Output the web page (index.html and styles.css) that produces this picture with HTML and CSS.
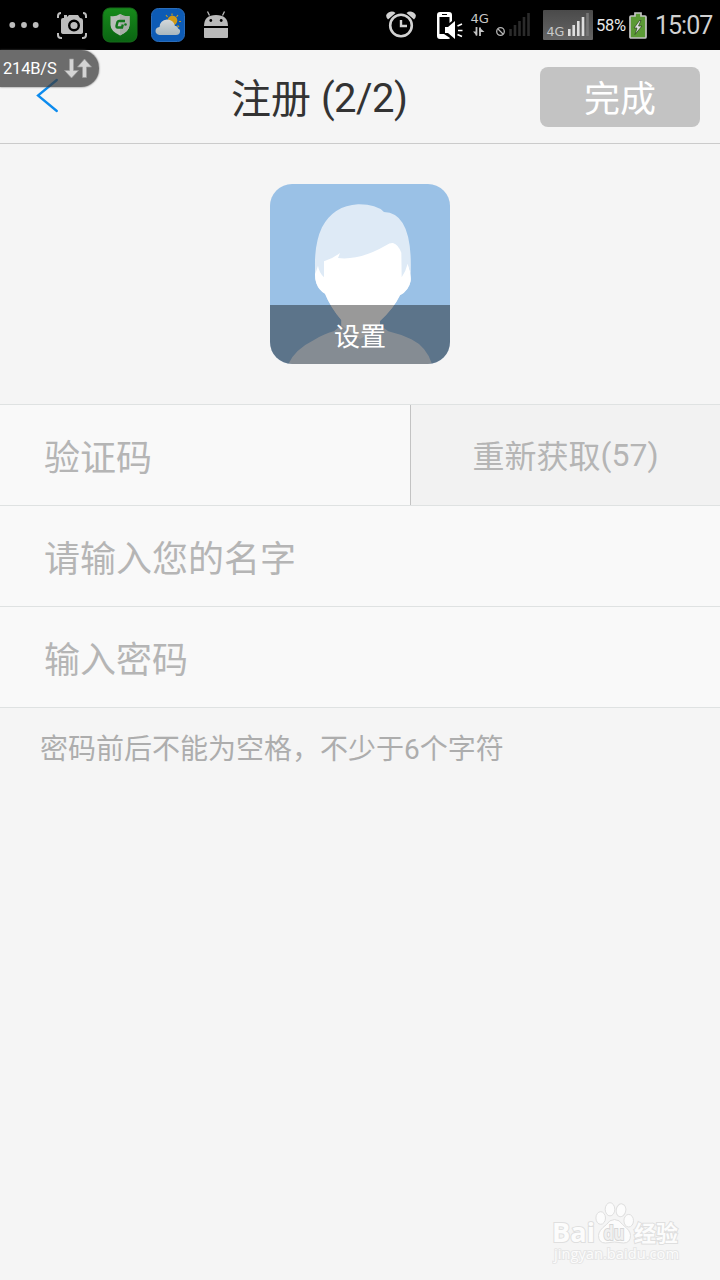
FILE: index.html
```html
<!DOCTYPE html>
<html lang="zh-CN">
<head>
<meta charset="utf-8">
<title>注册</title>
<link rel="stylesheet" href="styles.css">
</head>
<body>
<div class="statusbar">
  <svg class="slot" viewBox="0 0 48 50"><g fill="#bdbdbd"><circle cx="12.300" cy="25" r="2.900"/><circle cx="24" cy="25" r="2.900"/><circle cx="35.700" cy="25" r="2.900"/></g></svg>
  <svg class="slot" viewBox="0 0 48 50">
    <path d="M10 18v-2q0-3 3-3M35 13q3 0 3 3v2M10 33v2q0 3 3 3h1M34 38h1q3 0 3-3v-2" fill="none" stroke="#bdbdbd" stroke-width="2"/>
    <path d="M15 18h1v-3h3v2l2-2h9l2 3q3 0 3 3v11q0 2-3 2H16q-3 0-3-2V20q0-2 2-2z" fill="#bdbdbd"/>
    <circle cx="26" cy="25.500" r="4.800" fill="none" stroke="#000" stroke-width="2.400"/>
  </svg>
  <svg class="slot" viewBox="0 0 48 50">
    <defs><linearGradient id="green" x2="0" y2="1"><stop offset="0" stop-color="#178a1b"/><stop offset="1" stop-color="#0a6412"/></linearGradient></defs>
    <rect x="7" y="8" width="34" height="34" rx="7" fill="url(#green)" stroke="#176b1b"/>
    <path d="M24 14q5 3 9.500 2v9q0 6-9.500 10.500Q14.500 31 14.500 25v-9q5 1 9.500-2z" fill="#b9beb9"/>
    <path d="M24 14q5 3 9.500 2v9q0 6-9.500 10.500z" fill="#a8afa8"/>
    <path d="M29 21h-6q-1 0-1.500 1l-1 4q0 1.500 1 1.500H26l.8-3" fill="none" stroke="#12761b" stroke-width="2.400"/><circle cx="29.500" cy="24.500" r="1.300" fill="#12761b"/>
  </svg>
  <svg class="slot" viewBox="0 0 48 50">
    <defs><linearGradient id="cloud" x2="0" y2="1"><stop offset="0" stop-color="#d5d8da"/><stop offset="1" stop-color="#a8b7be"/></linearGradient></defs>
    <rect x="7.500" y="8.500" width="33" height="33" rx="7" fill="#0d5bb5" stroke="#2b6dba"/>
    <circle cx="28.500" cy="20.500" r="4.800" fill="#d29b17"/>
    <path d="M28 13.500v2M22 15l1.500 2M34 15l-1.500 2M37 21.500h-2M35 27l-1.500-1.500" stroke="#c39a25" stroke-width="1.200"/>
    <path d="M15.500 35Q11.500 34 11.500 31q0-3.500 4-4 .5-7 7.500-7.500 6.500 0 8 6.500 3-.5 3 2.500 2.500 1 2 3.500-.5 3-4 3z" fill="url(#cloud)"/>
  </svg>
  <svg class="slot" viewBox="0 0 48 50">
    <path d="M17.500 15.500l-2-4M30.500 15.500l2-4" fill="none" stroke="#bababa" stroke-width="1.300"/>
    <path d="M12 26q0-11 12-11t12 11zM12 28h24v9q0 1-1 1H13q-1 0-1-1z" fill="#bababa"/>
    <circle cx="18.800" cy="20.500" r="1.400"/><circle cx="29.200" cy="20.500" r="1.400"/>
  </svg>
  <div class="system">
    <svg width="34" height="50" viewBox="0 0 34 50">
      <circle cx="17" cy="25.500" r="10.800" fill="none" stroke="#d2d2d2" stroke-width="2.600"/>
      <path d="M17 20v6h6" fill="none" stroke="#d2d2d2" stroke-width="2.400"/>
      <path d="M4 19.500Q0 15 4.500 12.500q4-2 7 .5zM30 19.500q4-4.500-.5-7-4-2-7 .5z" fill="#d2d2d2"/>
    </svg>
    <svg class="mute" width="28" height="50" viewBox="0 0 28 50">
      <path d="M4 12h9q3 0 3 3v6l-2.500 2v-6H3.500v17H8l6 4q0 1-2 1H4q-3 0-3-3V15q0-3 3-3z" fill="#fff"/><path d="M6 14.500h5" stroke="#000"/>
      <path d="M9 27h3l7-6v18l-7-6H9z" fill="#fff"/><path d="M21.500 26l4.500-2M22 30.500h4.500M21.500 34.500l4.500 2" stroke="#fff" stroke-width="1.600"/>
    </svg>
    <svg class="sim1" width="64" height="50" viewBox="0 0 64 50">
      <path d="M8.500 27v8.500M12 36v-8.500" stroke="#c4c4c4" stroke-width="1.800"/><path d="M5 31.500h4V36zM11.500 27.500v4.500h5z" fill="#c4c4c4"/>
      <circle cx="32.500" cy="31.500" r="3.800" fill="none" stroke="#b5b5b5" stroke-width="1.300"/><path d="M30 29l5 5" stroke="#b5b5b5" stroke-width="1.300"/>
      <path d="M42.500 29v7M47 25v11M51.500 21v15M56 17v19M60.500 13v23" stroke="#2b2b2b" stroke-width="2.600"/>
      <text class="net" x="2.500" y="23" textLength="18.500" lengthAdjust="spacingAndGlyphs">4G</text>
    </svg>
    <svg class="sim2" width="50" height="50" viewBox="0 0 50 50">
      <defs><linearGradient id="grey" x2="0" y2="1"><stop offset="0" stop-color="#4a4a4a"/><stop offset="1" stop-color="#656565"/></linearGradient></defs>
      <rect y="10" width="50" height="30" rx="1" fill="url(#grey)"/>
      <path d="M26.300 29v7M30.700 25v11M35.300 21v15M40 17v19" stroke="#dedede" stroke-width="2.600"/><path d="M44.500 13v23" stroke="#777" stroke-width="2.600"/>
      <text class="net" x="3.500" y="36" textLength="18" lengthAdjust="spacingAndGlyphs">4G</text>
    </svg>
    <span class="percent">58%</span>
    <svg class="battery" width="18" height="50" viewBox="0 0 18 50">
      <path d="M6 13h6v3h4q1 0 1 1v20q0 1-1 1H2q-1 0-1-1V17q0-1 1-1h4z" fill="#5b9a35" stroke="#c4c4c4" stroke-width="1.700"/>
      <path d="M10.500 20.500L5 28h3l-2 6.500L13 26h-3.500l2.500-5.500z" fill="#ddd" stroke="#28431a" stroke-width=".7"/>
    </svg>
    <time class="clock">15:07</time>
  </div>
</div>

<header class="titlebar">
  <svg class="back" width="24" height="36" viewBox="0 0 24 36"><path d="M20.800 2L2 17.500 20.800 33" fill="none" stroke="#0c8bee" stroke-width="2.300" stroke-linecap="round"/></svg>
  <h1 class="title">注册 <span class="count">(2/2)</span></h1>
  <button class="done">完成</button>
  <div class="speed">
    <span>214B/S</span>
    <svg width="30" height="24" viewBox="0 0 30 24"><g fill="#d4d4d4" stroke="#9b9b9b" stroke-width=".7"><path d="M5.500 2h4v11.500h5L7.500 21 .5 13.500h5zM18.500 20.500h4V10h5L20.500 2 13.500 10h5z"/></g></svg>
  </div>
</header>

<section class="photo">
  <div class="avatar">
    <svg width="180" height="180" viewBox="0 0 540 540">
      <rect width="540" height="540" fill="#9ac1e6"/>
      <path d="M55 540Q75 496 132 468Q165 448 192 442L214 424V408Q181 369 165 329Q147 320 139 298Q132 280 137 244L150 170H400L414 238Q424 266 422 291Q417 319 390 334Q371 374 330 411V424L355 442Q390 450 424 466Q469 488 486 540z" fill="#deeaf6"/>
      <path d="M214 424V408Q181 369 165 329Q147 320 139 298Q132 280 137 244L150 170H400L414 238Q424 266 422 291Q417 319 390 334Q371 374 330 411V424L270 466z" fill="#fff"/>
      <path d="M162 280V232Q188 224 210 207Q207 215 204 222Q269 230 350 183Q359 176 369 177Q385 182 394 206L395 280Q407 263 413 239Q417 251 422 270Q429 86 342 84Q318 60 264 61Q191 65 156 130Q130 185 136 270L144 245Q147 265 162 280z" fill="#deeaf6"/>
    </svg>
    <div class="set">设置</div>
  </div>
</section>

<main class="form">
  <div class="row"><div class="field">验证码</div><div class="resend">重新获取<span class="seconds">(57)</span></div></div>
  <div class="row"><div class="field">请输入您的名字</div></div>
  <div class="row"><div class="field">输入密码</div></div>
</main>
<p class="hint">密码前后不能为空格，不少于6个字符</p>

<footer class="watermark">
  <svg width="130" height="64" viewBox="0 0 130 64">
    <g class="mark">
      <ellipse cx="48.700" cy="16" rx="4.800" ry="6.300"/><ellipse cx="58" cy="7.300" rx="4.800" ry="6.600"/><ellipse cx="69" cy="8.300" rx="4.800" ry="6.500" transform="rotate(10 69 8.300)"/><ellipse cx="76.700" cy="18.700" rx="4.800" ry="6.300"/>
      <path d="M62.500 17.500q5 0 8 5 8 6 8 11 0 7.500-7 7.500-9-2-18 0-7 0-7-7.500 0-5 8-11 3-5 8-5z"/>
      <text class="bai" x="0" y="40" textLength="43" lengthAdjust="spacingAndGlyphs">Bai</text>
      <text class="du" x="51.500" y="37.500" textLength="21" lengthAdjust="spacingAndGlyphs">du</text>
      <text class="exp" x="82" y="39" textLength="44" lengthAdjust="spacingAndGlyphs">经验</text>
      <text class="url" x="2" y="57" textLength="125" lengthAdjust="spacingAndGlyphs">jingyan.baidu.com</text>
    </g>
  </svg>
</footer>
</body>
</html>
```
FILE: styles.css
```css
* { box-sizing: border-box; }
body {
  margin: 0;
  width: 720px;
  height: 1280px;
  display: flex;
  flex-direction: column;
  overflow: hidden;
  background: #f5f5f5;
  font-family: Roboto, "Noto Sans CJK SC", sans-serif;
}
svg { display: block; flex: none; }
.statusbar { height: 50px; display: flex; background: #000; flex: none; }
.slot { width: 48px; height: 50px; }
.system { display: flex; align-items: center; margin-left: 144px; color: #d0d0d0; }
.mute { margin-left: 18px; }
.sim1 { margin-left: 4px; }
.sim2 { margin-left: 11px; }
.net { font: 12px "DejaVu Sans", sans-serif; fill: #c8c8c8; }
.percent { width: 33px; margin-left: 3px; padding-top: 2px; font-size: 16.5px; letter-spacing: -.3px; line-height: 50px; white-space: nowrap; color: #e8e8e8; }
.clock { margin-left: 8px; padding-top: 2px; font-size: 25px; letter-spacing: -1px; line-height: 50px; white-space: nowrap; }

.titlebar {
  position: relative;
  height: 94px;
  flex: none;
  display: flex;
  align-items: center;
  border-bottom: 1px solid #cbcbcb;
}
.back { margin: -2px 0 0 36px; }
.title { margin: 6px 0 0 171px; font-size: 40px; font-weight: 400; line-height: 60px; color: #333; white-space: nowrap; }
.count { letter-spacing: -.5px; vertical-align: 1px; line-height: 1; }
.done {
  width: 160px;
  height: 60px;
  margin: 0 20px 0 auto;
  padding: 6px 0 0;
  border: 0;
  border-radius: 8px;
  background: #c3c3c3;
  color: #fff;
  font: inherit;
  font-size: 36px;
  line-height: 54px;
}
.speed {
  position: absolute;
  left: 0;
  top: 0;
  width: 99px;
  height: 37px;
  display: flex;
  align-items: center;
  gap: 7px;
  padding-left: 3px;
  border-radius: 0 18px 18px 0;
  background: rgba(60, 60, 60, .74);
  box-shadow: 0 0 2px #555;
  color: #fff;
  font-size: 16.5px;
  letter-spacing: -.2px;
}

.photo { height: 260px; flex: none; padding-top: 40px; display: flex; justify-content: center; }
.avatar { position: relative; width: 180px; height: 180px; border-radius: 22px; overflow: hidden; }
.set {
  position: absolute;
  inset: 121px 0 0;
  padding-top: 2px;
  background: rgba(0, 0, 0, .4);
  color: #fff;
  font-size: 26px;
  line-height: 61px;
  text-align: center;
}

.form { flex: none; border-top: 1px solid #dfe2e2; background: #f9f9f9; color: #b5b5b5; }
.row { height: 101px; display: flex; border-bottom: 1px solid #dfe2e2; }
.field { flex: 1; padding: 2px 0 0 44px; font-size: 36px; line-height: 104px; height: 100px; }
.resend {
  width: 310px;
  height: 100px;
  padding-top: 2px;
  border-left: 1px solid #c3c3c3;
  background: #f2f2f2;
  font-size: 32px;
  line-height: 101px;
  text-align: center;
}
.seconds { vertical-align: 2px; line-height: 1; }
.hint { margin: 22px 0 0 40px; font-size: 28px; line-height: 40px; color: #adadad; }

.watermark { margin: auto 38px 14px auto; }
.mark { fill: #fcfcfc; stroke: #dfdfdf; stroke-width: 1; }
.mark text { paint-order: stroke; stroke-width: 2; }
.bai { font: bold 27px "Open Sans", sans-serif; }
.mark .du { font: bold 20px "Open Sans", sans-serif; fill: #f0f0f0; stroke: #d6d6d6; }
.exp { font: bold 22px "Noto Sans CJK SC", sans-serif; }
.mark .url { font: 14px "Open Sans", sans-serif; stroke: #e6e6e6; }
```
